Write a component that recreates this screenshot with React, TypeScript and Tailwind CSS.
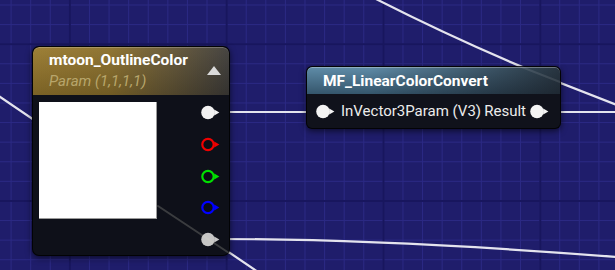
import React from "react";

type PinProps = { kind: "fill" | "ring"; color: string };

function Pin({ kind, color }: PinProps) {
  return (
    <svg width="20" height="15" viewBox="0 0 20 15" className="block shrink-0">
      {kind === "fill" ? (
        <circle cx="7" cy="7.5" r="6.8" fill={color} />
      ) : (
        <circle cx="7" cy="7.5" r="5.7" fill="#0b0d15" stroke={color} strokeWidth="2.2" />
      )}
      <polygon points="13.2,4.6 18.4,7.5 13.2,10.4" fill={color} />
    </svg>
  );
}

export default function App() {
  return (
    <div
      className="relative w-[615px] h-[270px] overflow-hidden [background-color:#1f1d6b] [background-image:linear-gradient(to_right,#18165e_2px,transparent_2px),linear-gradient(to_bottom,#18165e_2px,transparent_2px),linear-gradient(to_right,#2b2984_1px,transparent_1px),linear-gradient(to_bottom,#2b2984_1px,transparent_1px)] [background-size:156.8px_156.8px,156.8px_156.8px,19.6px_19.6px,19.6px_19.6px] [background-position:68.9px_0,0_43.2px,10.6px_0,0_4.5px]"
      style={{ fontFamily: "Roboto, 'Noto Sans', sans-serif" }}
    >
      {/* wires under nodes */}
      <svg className="absolute inset-0" width="615" height="270" viewBox="0 0 615 270">
        <g fill="none" stroke="#e4e4ee" strokeWidth="2.2" strokeLinecap="round">
          <path d="M -2 95.5 C 80 152, 170 212, 258 272" />
          <path d="M 376 -1 Q 490 57 617 105" />
          <path d="M 216 112 L 318 112" />
          <path d="M 546 112 L 617 112" />
          <path d="M 216 239 C 330 239, 450 244, 617 257" />
        </g>
      </svg>

      {/* Node 1: mtoon_OutlineColor */}
      <div className="absolute left-[32px] top-[46px] w-[198px] h-[210px] rounded-[7px] border border-black/80 bg-[#0e1019] shadow-[0_2px_6px_rgba(0,0,0,0.6)] overflow-hidden flex flex-col">
        <div className="h-[48px] shrink-0 flex items-start justify-between pl-[16px] pr-[8px] pt-[5px] rounded-t-[6px] shadow-[inset_0_1px_0_rgba(255,255,255,0.22)] bg-[linear-gradient(to_bottom,rgba(255,255,255,0.04),rgba(0,0,0,0.2)),linear-gradient(to_right,#9a7b2f_0%,#8c712d_40%,#6c5c36_65%,#403e3b_100%)]">
          <div className="flex flex-col">
            <div className="text-[15.5px] leading-[17px] font-bold text-white whitespace-nowrap">mtoon_OutlineColor</div>
            <div className="mt-[4px] text-[15px] leading-[17px] italic text-[#b8a66c] whitespace-nowrap">Param (1,1,1,1)</div>
          </div>
          <svg width="14" height="9" viewBox="0 0 14 9" className="mt-[14px] block">
            <polygon points="0,9 7,0 14,9" fill="#dadada" />
          </svg>
        </div>
        <div className="flex-1 flex justify-between">
          <div className="ml-[6px] mt-[7px] w-[118px] h-[117px] bg-white border-r border-b border-[#9a9a9a]" />
          <div className="flex flex-col pt-[2px] pr-[8px]">
            <div className="h-[31.7px] flex items-center"><Pin kind="fill" color="#f2f2f2" /></div>
            <div className="h-[31.7px] flex items-center"><Pin kind="ring" color="#f00000" /></div>
            <div className="h-[31.7px] flex items-center"><Pin kind="ring" color="#00e000" /></div>
            <div className="h-[31.7px] flex items-center"><Pin kind="ring" color="#0000ff" /></div>
            <div className="h-[31.7px] flex items-center"><Pin kind="fill" color="#c6c6c6" /></div>
          </div>
        </div>
      </div>

      {/* Node 2: MF_LinearColorConvert */}
      <div className="absolute left-[306px] top-[66px] w-[255px] h-[63px] rounded-[6px] border border-black/80 bg-[#10121b] shadow-[0_2px_6px_rgba(0,0,0,0.6)] overflow-hidden flex flex-col">
        <div className="h-[27px] shrink-0 pl-[16px] pt-[6px] rounded-t-[5px] shadow-[inset_0_1px_0_rgba(255,255,255,0.3)] bg-[linear-gradient(to_right,rgba(0,0,0,0)_25%,rgba(22,24,30,0.75)_100%),linear-gradient(to_bottom,#5f8ca8,#35566c)]">
          <div className="text-[15.5px] leading-[17px] font-bold text-white whitespace-nowrap">MF_LinearColorConvert</div>
        </div>
        <div className="flex-1 flex items-center justify-between pl-[9px] pr-[10px] pt-[1px]">
          <div className="flex items-center gap-[5px]">
            <Pin kind="fill" color="#f4f4f4" />
            <span className="text-[15px] leading-[17px] text-[#ececec] whitespace-nowrap">InVector3Param (V3)</span>
          </div>
          <div className="flex items-center gap-[4px]">
            <span className="text-[15px] leading-[17px] text-[#ececec] whitespace-nowrap">Result</span>
            <Pin kind="fill" color="#f4f4f4" />
          </div>
        </div>
      </div>

      {/* faint wire segments seen through node bodies */}
      <svg className="absolute inset-0 pointer-events-none" width="615" height="270" viewBox="0 0 615 270">
        <g fill="none" strokeWidth="2" strokeLinecap="round">
          <path d="M 158 206 L 229 253" stroke="rgba(220,220,200,0.22)" />
          <path d="M 514 64 L 560 82" stroke="rgba(255,255,255,0.1)" />
        </g>
      </svg>
    </div>
  );
}
